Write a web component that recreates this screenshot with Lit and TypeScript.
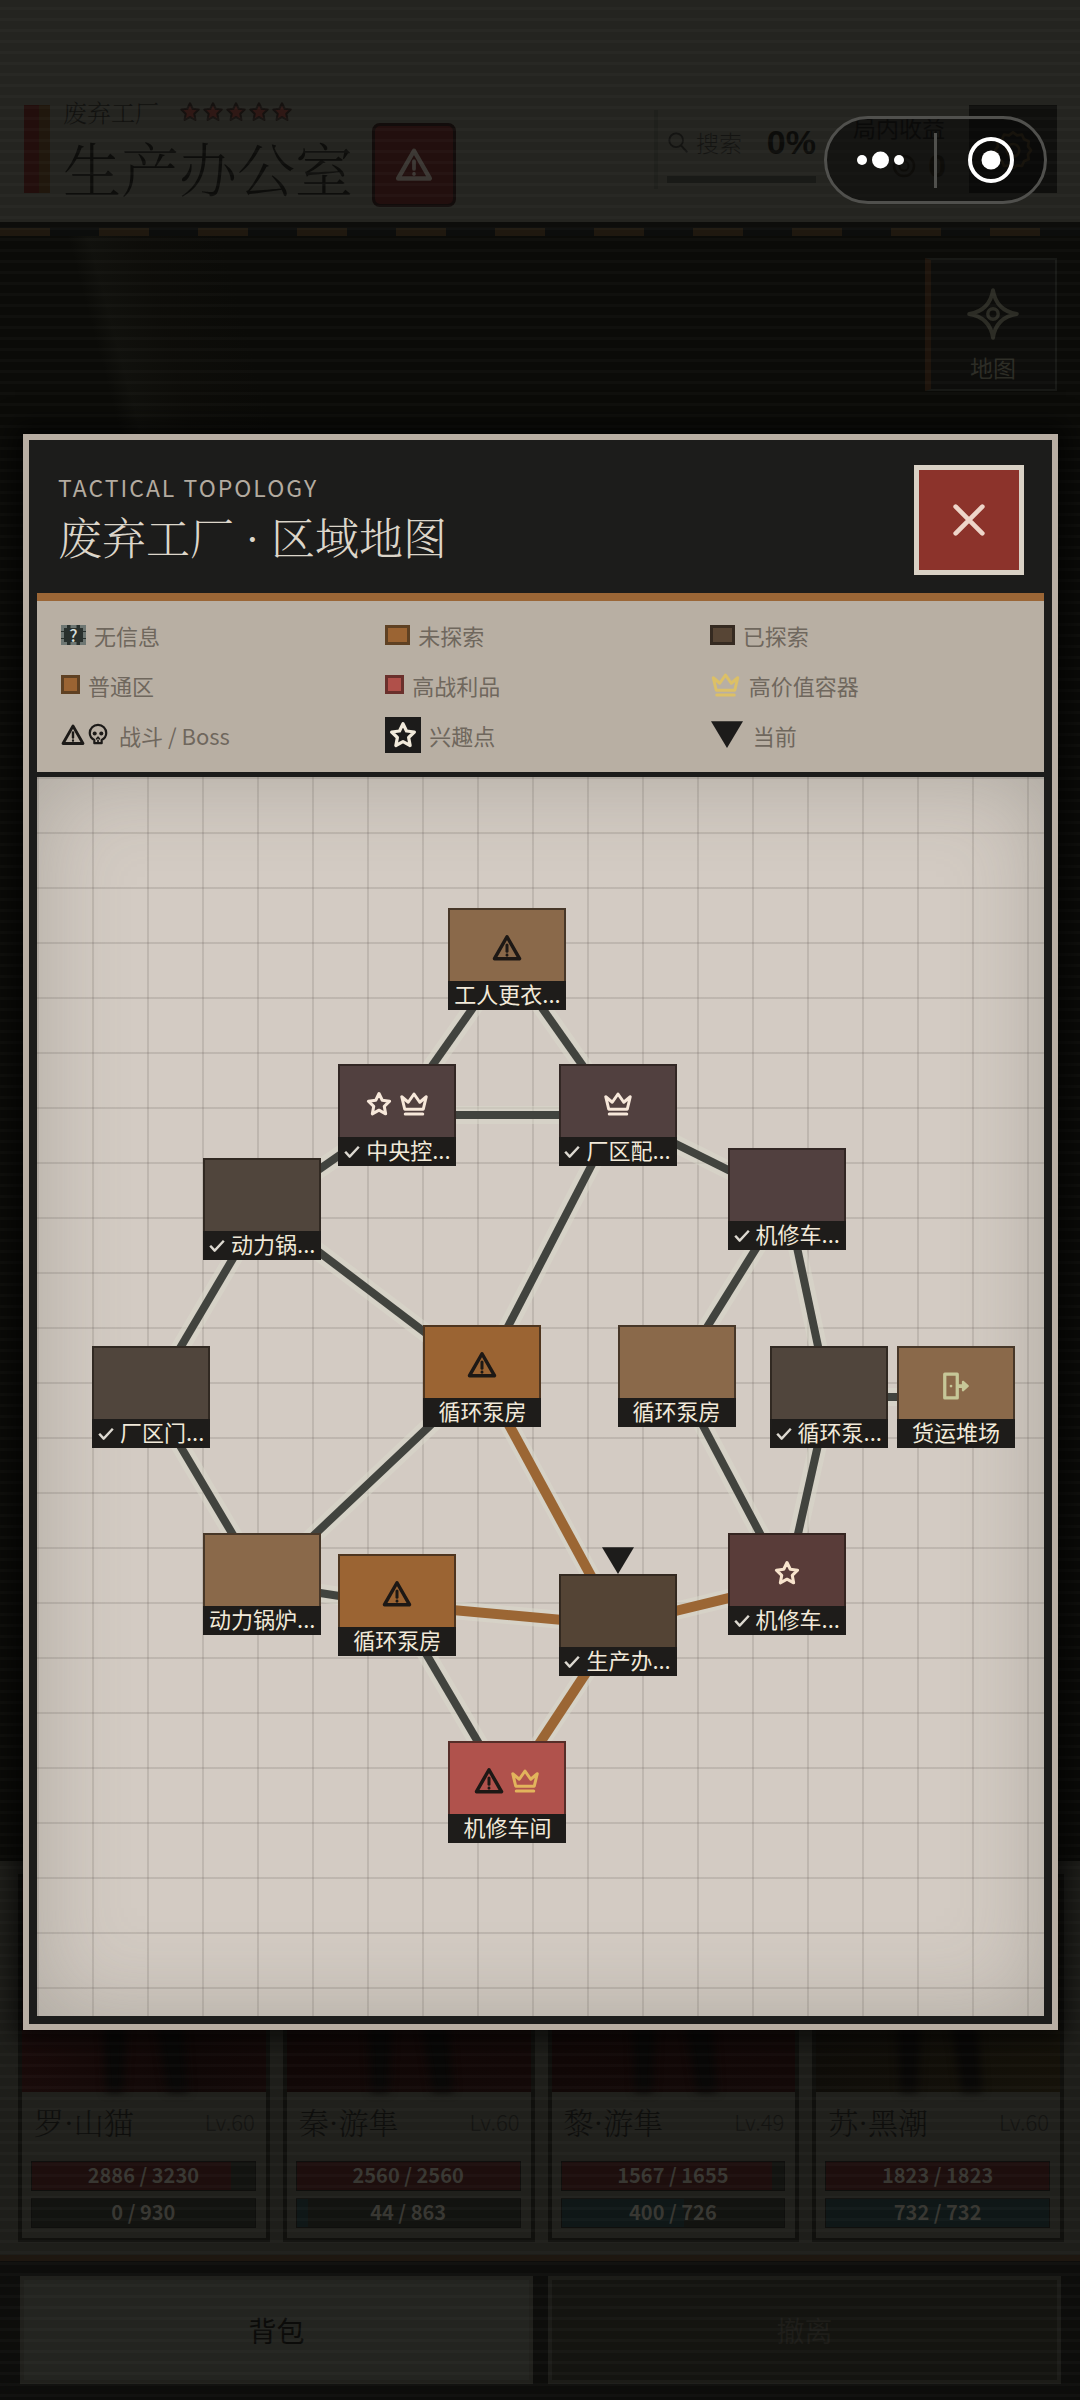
import { LitElement, html, svg, css, nothing } from "lit";
import { customElement, property } from "lit/decorators.js";

type IconName = "warn" | "skull" | "star" | "starFull" | "crown" | "exit" | "check" | "close" | "search" | "compass" | "gear" | "coin" | "pointer";

const ICONS: Record<IconName, unknown> = {
  warn: svg`<path d="M12 3 L22 20.5 H2 Z" stroke-width="2.8"/><path d="M12 9.5v5" stroke-width="2.4"/><path d="M12 17.4v.4" stroke-width="2.2"/>`,
  skull: svg`<path d="M8 22v-3.400C5 17 3 14.400 3 11 3 5.800 7 2 12 2s9 3.800 9 9c0 3.400-2 6-5 7.600V22z" stroke-width="2.4"/><circle cx="8.400" cy="11.500" r="2.200" fill="currentColor" stroke="none"/><circle cx="15.600" cy="11.500" r="2.200" fill="currentColor" stroke="none"/><path d="M10.500 17.200 12 15.500l1.500 1.700M12 18.800V22" stroke-width="1.800"/>`,
  star: svg`<path d="M12 3l2.800 5.800 6.300.8-4.600 4.400 1.200 6.400L12 17.300l-5.700 3.100 1.200-6.400L2.900 9.600l6.300-.8z" stroke-width="2.600"/>`,
  starFull: svg`<path d="M12 2.500l2.900 6 6.600.9-4.800 4.600 1.200 6.600L12 17.500l-5.900 3.100 1.200-6.600-4.800-4.600 6.600-.9z" fill="currentColor" stroke="#15110f" stroke-width="2.200"/>`,
  crown: svg`<path d="M2.200 6.200 4.600 16.200H19.400L21.800 6.200 16.600 10.600 12 4 7.400 10.600Z" stroke-width="2.400"/><path d="M5 20H19" stroke-width="2.400"/>`,
  exit: svg`<path d="M3 2.500h10v19H3z" stroke-width="2.600"/><circle cx="8" cy="12" r="1.100" fill="currentColor" stroke="none"/><path d="M14 12h5" stroke-width="3"/><path d="M17.500 8.500 21.500 12l-4 3.500z" fill="currentColor" stroke-width="1.600"/>`,
  check: svg`<path d="M3 13l5.500 6L21 5.500" stroke-width="3.600" stroke-linecap="square"/>`,
  close: svg`<path d="M4 4l16 16M20 4L4 20" stroke-width="2.800"/>`,
  search: svg`<circle cx="10" cy="10" r="7.500" stroke-width="2"/><path d="M15.500 16l6 6.500" stroke-width="2.200"/>`,
  compass: svg`<path d="M12 1q1.500 9.500 11 11-9.500 1.500-11 11-1.500-9.500-11-11 9.500-1.500 11-11z" stroke-width="1.800"/><circle cx="12" cy="12" r="2.400" stroke-width="1.600"/>`,
  gear: svg`<path d="M12 2l2.400 1.800 3-.4 1.200 2.800 2.800 1.200-.4 3L22.800 12.800 21 15.200l.4 3-2.800 1.200-1.200 2.800-3-.4L12 23.600l-2.400-1.800-3 .4-1.200-2.800-2.800-1.200.4-3L1.200 12.800 3 10.400l-.4-3 2.800-1.200 1.200-2.800 3 .4z" stroke-width="1.600"/><circle cx="12" cy="12.800" r="3.800" stroke-width="1.600"/>`,
  coin: svg`<circle cx="12" cy="12" r="10" stroke-width="2.400"/><circle cx="12" cy="12" r="4.500" stroke-width="2"/>`,
  pointer: svg`<path d="M0 1H24L12 21Z" fill="currentColor" stroke="none"/>`,
};

@customElement("app-icon")
class AppIcon extends LitElement {
  @property() name: IconName = "star";
  static styles = css`
    :host { display: inline-flex; width: 30px; height: 30px; flex: none; }
    svg { width: 100%; height: 100%; display: block; fill: none; stroke: currentColor; stroke-linecap: round; stroke-linejoin: round; }
  `;
  render() {
    return html`<svg viewBox="0 0 24 24" aria-hidden="true">${ICONS[this.name]}</svg>`;
  }
}

interface Room {
  id: string;
  label: string;
  x: number;
  y: number;
  tone: string;
  done?: boolean;
  here?: boolean;
  icons?: IconName[];
}

/* x and y are room centres, in map units. */
const MAP_W = 1006;
const MAP_H = 1239;
const ROOMS: Room[] = [
  { id: "locker", label: "工人更衣...", x: 470, y: 182, tone: "far", icons: ["warn"] },
  { id: "control", label: "中央控...", x: 360, y: 338, tone: "loot-done", done: true, icons: ["star", "crown"] },
  { id: "power", label: "厂区配...", x: 580, y: 338, tone: "loot-done", done: true, icons: ["crown"] },
  { id: "shopA", label: "机修车...", x: 749, y: 422, tone: "loot-done", done: true },
  { id: "boilerA", label: "动力锅...", x: 225, y: 432, tone: "done", done: true },
  { id: "gate", label: "厂区门...", x: 114, y: 620, tone: "done", done: true },
  { id: "pumpA", label: "循环泵房", x: 445, y: 599, tone: "near", icons: ["warn"] },
  { id: "pumpB", label: "循环泵房", x: 639, y: 599, tone: "far" },
  { id: "pumpC", label: "循环泵...", x: 791, y: 620, tone: "done", done: true },
  { id: "yard", label: "货运堆场", x: 918, y: 620, tone: "far", icons: ["exit"] },
  { id: "boilerB", label: "动力锅炉...", x: 225, y: 807, tone: "far" },
  { id: "pumpD", label: "循环泵房", x: 360, y: 828, tone: "near", icons: ["warn"] },
  { id: "office", label: "生产办...", x: 580, y: 848, tone: "here", done: true, here: true },
  { id: "shopB", label: "机修车...", x: 749, y: 807, tone: "loot-near", done: true, icons: ["star"] },
  { id: "shopC", label: "机修车间", x: 470, y: 1015, tone: "loot", icons: ["warn", "crown"] },
];
const LINKS: [string, string, boolean?][] = [
  ["locker", "control"], ["locker", "power"], ["control", "power"], ["control", "boilerA"],
  ["power", "shopA"], ["power", "pumpA"], ["boilerA", "gate"], ["boilerA", "pumpA"],
  ["shopA", "pumpB"], ["shopA", "pumpC"], ["pumpC", "yard"], ["gate", "boilerB"],
  ["pumpA", "boilerB"], ["pumpB", "shopB"], ["pumpC", "shopB"], ["boilerB", "pumpD"],
  ["pumpD", "shopC"], ["pumpA", "office", true], ["pumpD", "office", true],
  ["office", "shopB", true], ["office", "shopC", true],
];

@customElement("zone-map")
class ZoneMap extends LitElement {
  static styles = css`
    :host { display: block; position: relative; overflow: hidden; min-height: 800px;
      background:
        linear-gradient(90deg, rgba(90, 80, 76, .17) 2px, transparent 2px) 0 0 / 55px 55px,
        linear-gradient(rgba(90, 80, 76, .17) 2px, transparent 2px) 0 0 / 55px 55px,
        #d3cbc3; }
    .shade { position: absolute; inset: 0; box-shadow: inset 0 0 90px rgba(90, 90, 82, .32); }
    .links { position: absolute; inset: 0; width: 100%; height: 100%; }
    .halo { stroke: #dadacb; stroke-width: 18px; opacity: .5; }
    .link { stroke: #41433e; stroke-width: 8px; }
    .link.active { stroke: #9b6634; stroke-width: 10px; }
    .room { position: absolute; transform: translate(-50%, -50%); width: 118px; height: 102px; box-sizing: border-box;
      display: flex; flex-direction: column; padding: 0; border: 2px solid rgba(30, 24, 20, .62);
      font: inherit; color: #1d1815; cursor: pointer; }
    .icons { flex: 1; display: flex; align-items: center; justify-content: center; gap: 6px; padding-top: 4px; box-sizing: border-box; }
    .label { box-sizing: border-box; height: 29px; margin: 0 -2px -2px; padding-bottom: 5px; display: flex; align-items: center; justify-content: center; gap: 6px;
      background: #1e1c1a; color: #f1e9d9; font-size: 22px; line-height: 24px; white-space: nowrap; }
    .tick { width: 16px; height: 16px; color: #dcd8d0; margin-top: 6px; }
    .far { background-color: #8a694a; }
    .near { background-color: #9b6433; }
    .done { background-color: #50453c; }
    .here { background-color: #544435; }
    .loot { background-color: #b0524c; }
    .loot-done { background-color: #51403f; color: #f7e8da; }
    .loot-near { background-color: #593c39; color: #f7e3cc; }
    .loot .crown { color: #e2b45c; }
    .exit { color: #c6c798; }
    .star { width: 28px; height: 28px; }
    .marker { position: absolute; left: 50%; top: -30px; transform: translateX(-50%); width: 32px; height: 32px; color: #1d1c1b; }
  `;

  render() {
    const at = new Map(ROOMS.map((r) => [r.id, r]));
    const pct = (v: number, of: number) => `${(v / of) * 100}%`;
    const line = (a: Room, b: Room, cls: string) => svg`<line class=${cls}
      x1=${pct(a.x, MAP_W)} y1=${pct(a.y, MAP_H)} x2=${pct(b.x, MAP_W)} y2=${pct(b.y, MAP_H)}></line>`;
    return html`
      <div class="shade"></div>
      <svg class="links" aria-hidden="true">
        ${LINKS.map(([a, b]) => line(at.get(a)!, at.get(b)!, "halo"))}
        ${LINKS.map(([a, b, on]) => line(at.get(a)!, at.get(b)!, on ? "link active" : "link"))}
      </svg>
      ${ROOMS.map((r) => html`
        <button class="room ${r.tone}" type="button" style="left:${pct(r.x, MAP_W)};top:${pct(r.y, MAP_H)}">
          ${r.here ? html`<app-icon class="marker" name="pointer"></app-icon>` : nothing}
          <span class="icons">${(r.icons ?? []).map((i) => html`<app-icon class=${i} name=${i}></app-icon>`)}</span>
          <span class="label">${r.done ? html`<app-icon class="tick" name="check"></app-icon>` : nothing}<span>${r.label}</span></span>
        </button>`)}
    `;
  }
}

const SQUAD = [
  { name: "罗·山猫", lv: 60, hp: 2886, hpMax: 3230, mp: 0, mpMax: 930, tone: "" },
  { name: "秦·游隼", lv: 60, hp: 2560, hpMax: 2560, mp: 44, mpMax: 863, tone: "dim" },
  { name: "黎·游隼", lv: 49, hp: 1567, hpMax: 1655, mp: 400, mpMax: 726, tone: "dim" },
  { name: "苏·黑潮", lv: 60, hp: 1823, hpMax: 1823, mp: 732, mpMax: 732, tone: "olive" },
];

@customElement("app-root")
class AppRoot extends LitElement {
  static styles = css`
    :host { display: block; font-family: "Noto Sans CJK SC", "Noto Sans", sans-serif; background: #0b0b09; }
    * { box-sizing: border-box; }
    button { font: inherit; cursor: pointer; }
    h1, h2, h3, p, ul { margin: 0; padding: 0; font-weight: 400; }
    .serif { font-family: "Noto Serif CJK SC", "Source Han Serif SC", "Noto Sans CJK SC", serif; font-weight: 300; }
    .screen { position: relative; min-height: 100vh; display: flex; flex-direction: column; }
    .scan { position: absolute; inset: 0; pointer-events: none;
      background: linear-gradient(transparent 8px, rgba(255, 255, 255, .02) 8px) 0 -1px / 11px 11px; }

    .top { display: flex; align-items: center; padding: 91px 23px 15px 24px; background: #242420; border-bottom: 5px solid #0d0d0b; color: #0d0d0b; }
    .bar { width: 26px; height: 88px; margin-right: 13px; background: linear-gradient(90deg, #220e0c 56%, #20170d 56%); }
    .heads { display: flex; flex-direction: column; gap: 4px; height: 108px; }
    .place { display: flex; align-items: center; gap: 20px; font-size: 24px; line-height: 32px; height: 34px; color: #11110f; }
    .stars { display: flex; gap: 1px; color: #2f1815; }
    .stars app-icon { width: 22px; height: 22px; }
    .room-name { font-size: 58px; line-height: 68px; }
    .alert { display: grid; place-items: center; width: 84px; height: 84px; margin: 32px 0 0 19px; padding: 0; border: 3px solid #120c0b; border-radius: 8px; background: #220f0e; color: #3b3733; }
    .alert app-icon { width: 38px; height: 38px; }
    .search { margin-left: auto; width: 162px; height: 79px; border-left: 4px solid #1f201c; padding: 12px 0 6px 9px; display: flex; flex-direction: column; justify-content: space-between; color: #141412; }
    .search-row { display: flex; align-items: center; gap: 7px; font-size: 23px; line-height: 40px; font-weight: 300; }
    .search-row app-icon { width: 22px; height: 22px; }
    .search-row b { margin-left: auto; font: 700 34px/40px "Liberation Sans", sans-serif; color: #0c0c0a; }
    .track { height: 7px; background: #191a17; }
    .gain { margin-left: 36px; width: 94px; font-size: 23px; line-height: 34px; text-align: center; color: #0e0e0c; white-space: nowrap; }
    .purse { display: flex; align-items: center; justify-content: flex-end; gap: 12px; color: #15120c; }
    .purse app-icon { width: 24px; height: 24px; }
    .gain b { font: 700 32px/44px "Liberation Sans", sans-serif; }
    .badge { display: grid; place-items: center; width: 88px; height: 88px; margin-left: 23px; padding: 0; border: 0; background: #0f0f0d; color: #2b2313; }
    .badge app-icon { width: 40px; height: 40px; }
    .tape { height: 9px; border-top: 1px solid #0b0b09; background: repeating-linear-gradient(90deg, #1f180f 0 50px, #0c0d0c 50px 99px); }

    .stage { flex: 1; display: flex; justify-content: flex-end; align-items: flex-start; padding: 22px 23px;
      background: linear-gradient(75deg, transparent 130px, rgba(46, 46, 38, .16) 150px, rgba(34, 28, 20, .1) 200px, transparent 280px) 0 0 / 400px 250px no-repeat, #0b0b08; }
    .map-btn { width: 132px; height: 133px; padding: 16px 0 0; display: flex; flex-direction: column; align-items: center; gap: 10px; border: 2px solid #181916; border-left: 6px solid #1e140c; background: #0d0d0b; color: #2c2c25; font-size: 23px; line-height: 34px; }
    .map-btn app-icon { width: 52px; height: 52px; margin-top: 12px; }

    .squad { display: grid; grid-template-columns: repeat(4, 1fr); gap: 13px; padding: 13px 16px 13px 18px; background: #1e1e1a; border-bottom: 6px solid #1e1710; list-style: none; }
    .card { border: 4px solid #10100d; background: #20201c; }
    .portrait { height: 214px; background: linear-gradient(90deg, #190b0a, #100807 70%, #130908); display: flex; justify-content: center; align-items: flex-end; }
    .portrait.dim { background: linear-gradient(90deg, #110807, #130908); }
    .portrait.olive { background: linear-gradient(90deg, #0f0d09, #15120a); }
    .portrait svg { width: 60%; height: 130px; fill: #090807; filter: blur(4px); }
    .info { height: 146px; padding: 11px 10px 9px 9px; display: flex; flex-direction: column; gap: 7px; }
    .who { display: flex; justify-content: space-between; align-items: center; height: 36px; margin-bottom: 15px; padding: 0 1px 0 3px; color: #0e0e0c; }
    .who h3 { font-size: 30px; line-height: 36px; white-space: nowrap; }
    .who span { font-size: 22px; font-weight: 300; color: #131311; }
    .meter { position: relative; height: 30px; border: 1px solid #0f0f0d; background: #121310; text-align: center; color: #383732; font-weight: 700; font-size: 20px; line-height: 25px; }
    .fill { position: absolute; inset: 0 auto 0 0; background: #1d0e0d; }
    .fill.mp { background: #0f1717; }
    .meter span { position: relative; }

    .actions { display: grid; grid-template-columns: 1fr 1fr; gap: 15px; padding: 15px 19px 16px 20px; background: #0d0d0b; }
    .act { height: 108px; border: 4px solid #20201c; background: #232420; color: #0b0b09; font-size: 28px; }
    .act.off { background: #141410; border-color: #1c1c18; color: #1e1d19; }

    .overlay { position: absolute; inset: 0; display: flex; padding: 434px 22px 370px 23px; }
    .modal { flex: 1; min-width: 0; display: flex; flex-direction: column; border: 6px solid #b8aea3; background: #1c1c1b; padding: 8px; box-shadow: 0 0 24px 8px rgba(0, 0, 0, .7); }
    .m-head { display: flex; justify-content: space-between; align-items: center; padding: 17px 20px 18px 21px; }
    .eyebrow { font-size: 23px; line-height: 28px; margin-bottom: 4px; letter-spacing: 2px; color: #b3aba0; }
    .m-title { font-size: 44px; line-height: 62px; color: #dcd6ca; }
    .close { display: grid; place-items: center; width: 110px; height: 110px; padding: 0; border: 5px solid #d9d1c5; background: #8c332b; color: #eed5c9; }
    .close app-icon { width: 40px; height: 40px; }
    .legend { display: grid; grid-template-columns: repeat(3, 1fr); grid-auto-rows: 33px; row-gap: 17px; padding: 17px 10px 21px 24px; border-top: 8px solid #9b6636; border-bottom: 5px solid #1c1c1b; background: #b8afa3; list-style: none; color: #6f675d; font-size: 22px; }
    .legend li { display: flex; align-items: center; gap: 8px; }
    .sw { width: 25px; height: 20px; border: 3px solid #5f4123; background: #9b6433; flex: none; }
    .sw.sq { width: 19px; height: 19px; }
    .sw.red { background: #b0504a; border-color: #6a302c; }
    .sw.dark { background: #574535; border-color: #352a21; }
    .sw.unk { border: 3px dashed #6e7773; background: #29302d; color: #d6ddda; font-size: 17px; line-height: 13px; text-align: center; font-weight: 500; }
    .ink { color: #1c1a18; display: flex; gap: 2px; margin-right: 2px; }
    .ink app-icon { width: 24px; height: 24px; }
    .ink app-icon + app-icon { width: 22px; height: 22px; }
    .tile { display: grid; place-items: center; width: 36px; height: 36px; background: #1c1b1a; color: #f1eadb; }
    .tile app-icon { width: 30px; height: 30px; }
    .gold { color: #dcc067; width: 31px; }
    .cur { color: #1c1b1a; width: 32px; height: 32px; margin: 3px 2px 0 1px; }
    zone-map { flex: 1; }

    .capsule { position: absolute; top: 116px; right: 33px; width: 223px; height: 88px; display: flex; align-items: center; border: 3px solid #50504d; border-radius: 44px; background: rgba(8, 8, 7, .55); }
    .capsule button { flex: 1; height: 82px; padding: 0; border: 0; background: none; display: grid; place-items: center; }
    .capsule button + button { border-left: 3px solid #50504d; height: 55px; }
    .capsule svg { width: 48px; height: 48px; display: block; fill: #fff; }
    .ring { fill: none; stroke: #fff; stroke-width: 4px; }
  `;

  private meter(kind: string, v: number, max: number) {
    return html`<div class="meter"><div class="fill ${kind}" style="width:${(v / max) * 100}%"></div><span>${v} / ${max}</span></div>`;
  }

  render() {
    return html`
      <div class="screen">
        <header class="top">
          <div class="bar"></div>
          <div class="heads">
            <div class="place"><span class="serif">废弃工厂</span>
              <span class="stars">${[1, 2, 3, 4, 5].map(() => html`<app-icon name="starFull"></app-icon>`)}</span></div>
            <h1 class="room-name serif">生产办公室</h1>
          </div>
          <button class="alert" type="button" aria-label="警报"><app-icon name="warn"></app-icon></button>
          <div class="search">
            <div class="search-row"><app-icon name="search"></app-icon><span>搜索</span><b>0%</b></div>
            <div class="track"></div>
          </div>
          <div class="gain"><div>局内收益</div><div class="purse"><app-icon name="coin"></app-icon><b>0</b></div></div>
          <button class="badge" type="button" aria-label="设置"><app-icon name="gear"></app-icon></button>
        </header>
        <div class="tape"></div>
        <main class="stage">
          <button class="map-btn" type="button"><app-icon name="compass"></app-icon>地图</button>
        </main>
        <ul class="squad">
          ${SQUAD.map((m) => html`<li class="card">
            <div class="portrait ${m.tone}"><svg viewBox="0 0 100 100" preserveAspectRatio="none"><path d="M20 0H40L36 100H24ZM52 0H74L80 100H66Z"/></svg></div>
            <div class="info">
              <div class="who"><h3 class="serif">${m.name}</h3><span>Lv.${m.lv}</span></div>
              ${this.meter("hp", m.hp, m.hpMax)}${this.meter("mp", m.mp, m.mpMax)}
            </div></li>`)}
        </ul>
        <footer class="actions">
          <button class="act" type="button">背包</button>
          <button class="act off" type="button">撤离</button>
        </footer>
        <div class="scan"></div>

        <div class="overlay">
          <section class="modal" role="dialog" aria-labelledby="zone-title">
            <div class="m-head">
              <div><p class="eyebrow">TACTICAL TOPOLOGY</p><h2 class="m-title serif" id="zone-title">废弃工厂 · 区域地图</h2></div>
              <button class="close" type="button" aria-label="关闭"><app-icon name="close"></app-icon></button>
            </div>
            <ul class="legend">
              <li><span class="sw unk">?</span>无信息</li>
              <li><span class="sw"></span>未探索</li>
              <li><span class="sw dark"></span>已探索</li>
              <li><span class="sw sq"></span>普通区</li>
              <li><span class="sw sq red"></span>高战利品</li>
              <li><app-icon class="gold" name="crown"></app-icon>高价值容器</li>
              <li><span class="ink"><app-icon name="warn"></app-icon><app-icon name="skull"></app-icon></span>战斗 / Boss</li>
              <li><span class="tile"><app-icon name="star"></app-icon></span>兴趣点</li>
              <li><app-icon class="cur" name="pointer"></app-icon>当前</li>
            </ul>
            <zone-map></zone-map>
          </section>
        </div>

        <div class="capsule">
          <button type="button" aria-label="更多"><svg viewBox="0 0 48 48"><circle cx="5" cy="24" r="5"/><circle cx="23.500" cy="24" r="8.500"/><circle cx="42" cy="24" r="5"/></svg></button>
          <button type="button" aria-label="退出"><svg viewBox="0 0 48 48"><circle class="ring" cx="24" cy="24" r="21"/><circle cx="24" cy="24" r="9.500"/></svg></button>
        </div>
      </div>
    `;
  }
}
